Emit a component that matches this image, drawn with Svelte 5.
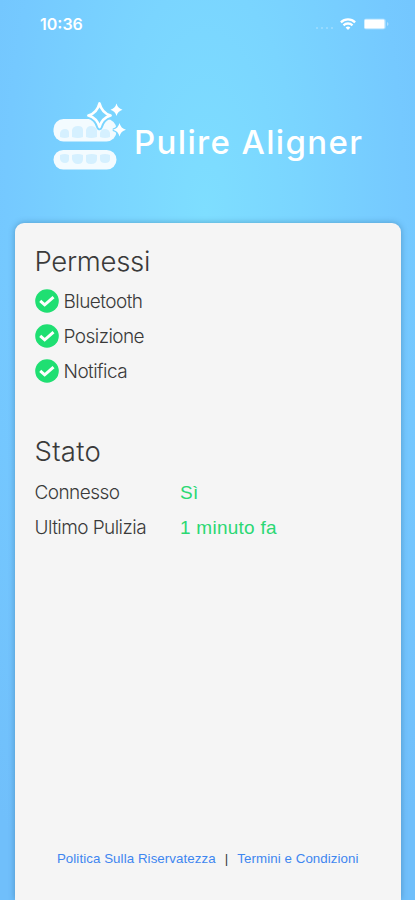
<script lang="ts">
	const permissions = ['Bluetooth', 'Posizione', 'Notifica'];

	const status = [
		{ label: 'Connesso', value: 'Sì' },
		{ label: 'Ultimo Pulizia', value: '1 minuto fa' }
	];
</script>

<div class="screen">
	<div class="status-bar">
		<span class="time">10:36</span>
		<div class="indicators">
			<svg width="20" height="4" viewBox="0 0 20 4" fill="#fff" opacity="0.3">
				<circle cx="1" cy="2" r="1" />
				<circle cx="6" cy="2" r="1" />
				<circle cx="11" cy="2" r="1" />
				<circle cx="16" cy="2" r="1" />
			</svg>
			<svg class="wifi" width="16" height="12" viewBox="0 0 16 12" fill="none" stroke="#fff" stroke-width="2.3">
				<path d="M0.9 4.3a10.2 10.2 0 0 1 14.2 0" />
				<path d="M3.5 7.3a6.5 6.5 0 0 1 9 0" />
				<path d="M8 12 5.6 9.6a3.4 3.4 0 0 1 4.8 0Z" fill="#fff" stroke="none" />
			</svg>
			<svg width="26" height="12" viewBox="0 0 26 12" fill="#fff">
				<rect x="-0.5" y="0.5" width="22.5" height="11" rx="3" opacity="0.3" />
				<rect x="0.5" y="1.5" width="20" height="9" rx="1.2" />
				<path d="M23 4v4q1.5-.6 1.5-2T23 4" opacity="0.4" />
			</svg>
		</div>
	</div>

	<header>
		<svg class="logo" width="74" height="70" viewBox="0 0 74 70">
			<rect x="0.5" y="17" width="63" height="22.5" rx="10" fill="#f3fbff" />
			<rect x="0.5" y="48" width="63" height="19.5" rx="9.7" fill="#f3fbff" />
			<g fill="#d5f0ff">
				<path d="M7 35v-4q1-4 5-4t4 4v4q-4 2-9 0Z" />
				<path d="M19 35v-7q1-4 6-4t5 4v7q-5 2-11 0Z" />
				<path d="M33 35v-7q1-4 5-4t6 4v7q-6 2-11 0Z" />
				<path d="M47 35v-4q1-4 5-4t5 4v4q-5 2-10 0Z" />
				<path d="M7 53q5-2 9 0v4q0 4-4 4t-5-4Z" />
				<path d="M19 53q6-2 11 0v4q0 5-5 5t-6-5Z" />
				<path d="M33 53q6-2 11 0v4q0 5-6 5t-5-5Z" />
				<path d="M47 53q5-2 10 0v4q0 4-5 4t-5-4Z" />
			</g>
			<path
				d="M46.5 1.5q2.5 9.5 11 12-8.5 2.5-11 11.5-2.5-9-11-11.5 8.5-2.5 11-12Z"
				fill="#7ad5ff"
				stroke="#7ad5ff"
				stroke-width="6.5"
				stroke-linejoin="round"
			/>
			<path
				d="M46.5 1.5q2.5 9.5 11 12-8.5 2.5-11 11.5-2.5-9-11-11.5 8.5-2.5 11-12Z"
				fill="#7ad5ff"
				stroke="#fff"
				stroke-width="2.7"
				stroke-linejoin="round"
			/>
			<path
				d="M66.5 21q1.3 5.5 6.5 6.7-5.2 1.3-6.5 6.8-1.3-5.5-6.5-6.8 5.2-1.2 6.5-6.7Z"
				fill="#fff"
				stroke="#7ad5ff"
				stroke-width="2.5"
				paint-order="stroke"
			/>
			<path d="M63.5 1.5q1.3 5 6 6.2-4.7 1.3-6 6.3-1.3-5-6-6.3 4.7-1.2 6-6.2Z" fill="#fff" />
		</svg>
		<h1>Pulire Aligner</h1>
	</header>

	<main>
		<section>
			<h2>Permessi</h2>
			<ul>
				{#each permissions as permission}
					<li>
						<svg width="24" height="24" viewBox="0 0 24 24">
							<circle cx="12" cy="12" r="11.8" fill="#1fdf72" />
							<path d="m5.2 11.8 4.5 4 8.8-7.6" fill="none" stroke="#fff" stroke-width="3" />
						</svg>
						<span>{permission}</span>
					</li>
				{/each}
			</ul>
		</section>

		<section class="state">
			<h2>Stato</h2>
			<dl>
				{#each status as row}
					<dt>{row.label}</dt>
					<dd>{row.value}</dd>
				{/each}
			</dl>
		</section>

		<footer>
			<a href="#privacy">Politica Sulla Riservatezza</a>
			<span>|</span>
			<a href="#terms">Termini e Condizioni</a>
		</footer>
	</main>
</div>

<style>
	.screen {
		display: flex;
		flex-direction: column;
		box-sizing: border-box;
		width: 415px;
		height: 900px;
		overflow: hidden;
		padding: 0 14px 0 15px;
		background: radial-gradient(ellipse 320px 780px at 205px 215px, #7edeff 0, #7ad5ff 30%, #75c9ff 62%, #70bffb 100%);
		font-family: Inter, 'Liberation Sans', sans-serif;
		color: #3a3a3a;
	}

	/* Status bar */
	.status-bar {
		display: flex;
		justify-content: space-between;
		align-items: center;
		box-sizing: border-box;
		height: 48px;
		padding: 0 11px 0 25px;
		color: #fff;
	}

	.time {
		font-size: 16px;
		font-weight: 600;
	}

	.indicators {
		display: flex;
		align-items: center;
	}

	.indicators svg:first-child {
		margin-top: 8px;
	}

	.wifi {
		margin: 0 8px 0 4px;
	}

	/* Logo */
	header {
		display: flex;
		flex: none;
		height: 175px;
		padding: 54px 0 0 38px;
		box-sizing: border-box;
		color: #fff;
	}

	.logo {
		flex: none;
	}

	h1 {
		margin: 20px 0 0 7px;
		font-size: 33px;
		font-weight: 500;
		line-height: 40px;
		letter-spacing: 1.35px;
		white-space: nowrap;
	}

	/* Card */
	main {
		display: flex;
		flex: 1;
		flex-direction: column;
		padding: 21px 20px 0 19.5px;
		border-radius: 9px 9px 0 0;
		background: #f5f5f5;
		box-shadow: 0 0 6px rgba(35, 90, 135, 0.45);
		font-weight: 300;
	}

	h2 {
		margin: 0 0 5px;
		font-size: 27.5px;
		font-weight: 300;
		line-height: 35px;
		letter-spacing: -0.3px;
	}

	ul,
	dl {
		margin: 0;
		padding: 0;
		font-size: 19px;
		line-height: 35px;
		letter-spacing: -0.55px;
	}

	li {
		display: flex;
		align-items: center;
		gap: 5px;
		height: 35px;
	}

	li svg {
		margin-top: -1px;
	}

	.state {
		margin-top: 45px;
	}

	.state h2 {
		letter-spacing: 0.3px;
	}

	dl {
		display: grid;
		grid-template-columns: 145.5px 1fr;
		padding-top: 1px;
	}

	dd {
		margin: 0;
		color: #2bd873;
		font-family: 'Liberation Sans', Arial, sans-serif;
		font-weight: 400;
		letter-spacing: 0.25px;
	}

	/* Links */
	footer {
		display: flex;
		justify-content: center;
		gap: 9px;
		margin-top: auto;
		padding-bottom: 31px;
		font-family: 'Liberation Sans', Arial, sans-serif;
		font-size: 13.3px;
		font-weight: 400;
		line-height: 20px;
		letter-spacing: 0.08px;
		white-space: nowrap;
	}

	a {
		color: #3e86f0;
		text-decoration: none;
	}
</style>
